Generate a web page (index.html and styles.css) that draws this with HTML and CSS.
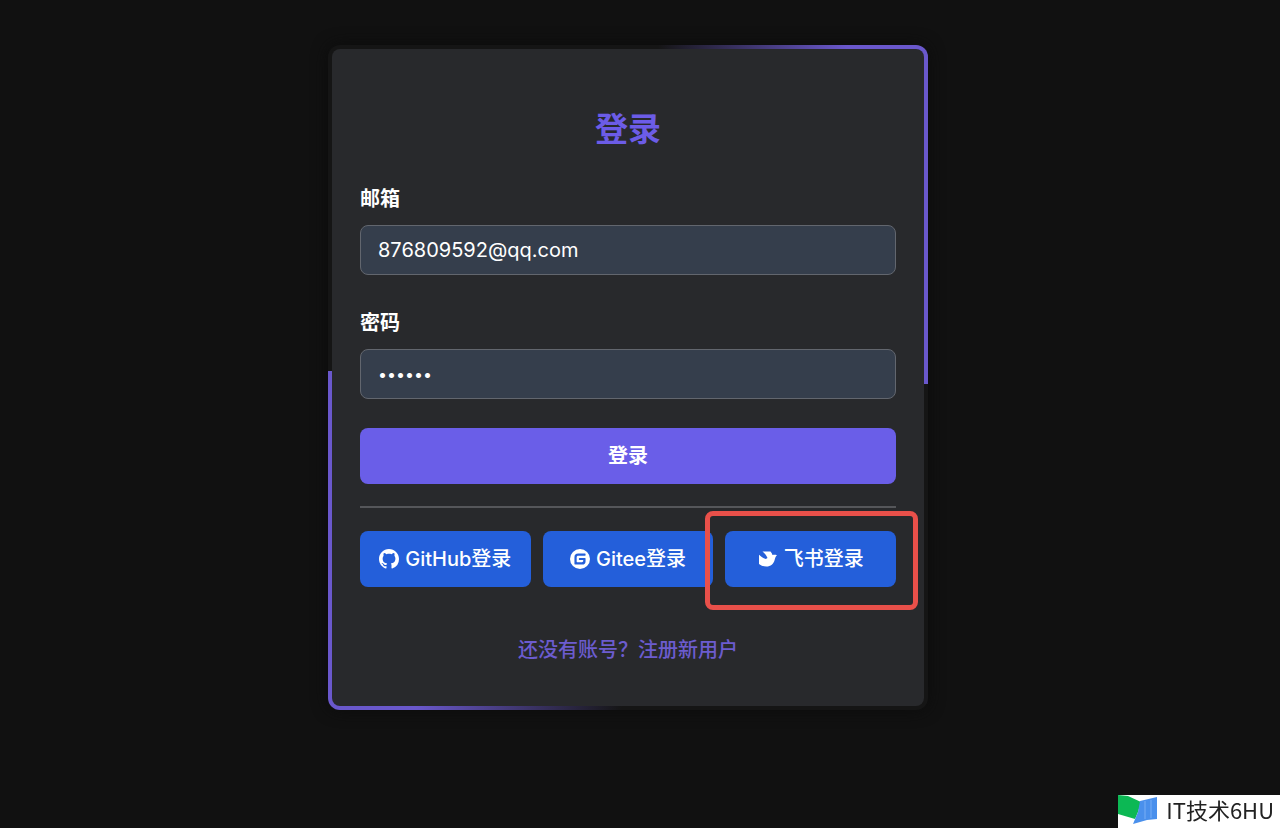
FILE: index.html
```html
<!DOCTYPE html>
<html lang="zh-CN">
  <head>
    <meta charset="utf-8">
    <title>登录</title>
    <link rel="stylesheet" href="styles.css">
  </head>
  <body>
    <main class="page">
      <div class="frame">
        <form class="card">
          <h1 class="title">登录</h1>
          <label class="label" for="email">邮箱</label>
          <input class="field" id="email" type="email" value="876809592@qq.com">
          <label class="label" for="password">密码</label>
          <input class="field" id="password" type="password" value="123456">
          <button class="btn btn-login" type="submit">登录</button>
          <hr class="line">
          <div class="others">
            <button class="btn btn-other" type="button">
              <svg class="icon" viewBox="0 0 16 16"><path d="M8 0C3.58 0 0 3.58 0 8c0 3.54 2.29 6.53 5.47 7.59.4.07.55-.17.55-.38 0-.19-.01-.82-.01-1.49-2.01.37-2.53-.49-2.69-.94-.09-.23-.48-.94-.82-1.13-.28-.15-.68-.52-.01-.53.63-.01 1.08.58 1.23.82.72 1.21 1.87.87 2.33.66.07-.52.28-.87.51-1.07-1.78-.2-3.64-.89-3.64-3.95 0-.87.31-1.59.82-2.15-.08-.2-.36-1.02.08-2.12 0 0 .67-.21 2.2.82.64-.18 1.32-.27 2-.27s1.36.09 2 .27c1.53-1.04 2.2-.82 2.2-.82.44 1.1.16 1.92.08 2.12.51.56.82 1.27.82 2.15 0 3.07-1.87 3.75-3.65 3.95.29.25.54.73.54 1.48 0 1.07-.01 1.93-.01 2.2 0 .21.15.46.55.38A8.01 8.01 0 0 0 16 8c0-4.42-3.58-8-8-8z"/></svg>
              <span>GitHub登录</span>
            </button>
            <button class="btn btn-other" type="button">
              <svg class="icon" viewBox="0 0 24 24"><path d="M11.984 0A12 12 0 0 0 0 12a12 12 0 0 0 12 12 12 12 0 0 0 12-12A12 12 0 0 0 12 0zm6.09 5.333c.328 0 .593.266.592.593v1.482a.594.594 0 0 1-.593.592H9.777c-.982 0-1.778.796-1.778 1.778v5.63c0 .327.266.592.593.592h5.63c.982 0 1.778-.796 1.778-1.778v-.296a.593.593 0 0 0-.592-.593h-4.15a.592.592 0 0 1-.592-.592v-1.482a.593.593 0 0 1 .593-.592h6.815c.327 0 .593.265.593.592v3.408a4 4 0 0 1-4 4H5.926a.593.593 0 0 1-.593-.593V9.778a4.444 4.444 0 0 1 4.445-4.444h8.296z"/></svg>
              <span>Gitee登录</span>
            </button>
            <div class="marked">
              <button class="btn btn-other" type="button">
                <svg class="icon" viewBox="0 0 20 20"><path d="M4.500 2.500h8c1 1.100 1.700 2.200 2 3.500 1.500-.4 3-.3 4.500.2-1.200 1.100-1.700 2.300-2.300 4.500-1 4-4 6.800-8.300 6.800-3 0-5.300-.8-7.400-2.500V5.800c2.100 2.100 4.300 3.600 6.800 4.300l1.700-1.200C8.500 6.600 6.800 4.400 4.500 2.500z"/></svg>
                <span>飞书登录</span>
              </button>
            </div>
          </div>
          <a class="register" href="#">还没有账号？注册新用户</a>
        </form>
      </div>
    </main>
    <div class="watermark">
      <svg class="watermark-logo" viewBox="0 0 40 32"><path d="M0 0l10 1 13 6-3 10-3 7L0 19z" fill="#0cb854"/><path d="M22 6l17-4v22l-10 1-14 4 5-12z" fill="#4a90ec"/><path d="M27 6v18M33 5v18" stroke="#79aef5"/></svg>
      <span>IT技术6HU</span>
    </div>
  </body>
</html>
```
FILE: styles.css
```css
* {
    box-sizing: border-box;
}
body {
    margin: 0;
    min-height: 100vh;
    background: #111;
    color: #fff;
    font-family: Inter, "Noto Sans CJK SC", sans-serif;
    font-size: 20px;
    line-height: 28px;
}
.page {
    padding: 45px 24px 45px 0;
}
/* two purple corners behind the card */
.frame {
    max-width: 600px;
    margin: 0 auto;
    padding: 4px;
    border-radius: 12px;
    background:
        linear-gradient(to right, transparent, #6a58cc 70%) top right / 45% 51% no-repeat,
        linear-gradient(to left, transparent, #6a58cc 70%) bottom left / 49% 51% no-repeat,
        #151515;
    box-shadow: 0 0 16px #0c0c0c;
}
.card {
    display: flex;
    flex-direction: column;
    padding: 56px 28px 42px;
    border-radius: 8px;
    background: #28292c;
}
.title {
    margin: 0 0 32px;
    color: #6c5ce7;
    font-size: 33px;
    line-height: 48px;
    text-align: center;
}
.label {
    margin-bottom: 12px;
    font-weight: 600;
}
.field {
    width: 100%;
    height: 50px;
    margin-bottom: 34px;
    padding: 0 17px;
    border: 1px solid #62666e;
    border-radius: 8px;
    background: #353e4c;
    color: #fff;
    font: inherit;
    outline: none;
}
#password {
    margin-bottom: 29px;
    font-size: 16px;
}
.btn {
    width: 100%;
    height: 56px;
    padding: 0;
    border: 0;
    border-radius: 8px;
    color: #fff;
    font: inherit;
    font-weight: 600;
    cursor: pointer;
}
.btn-login {
    background: #6a5ee8;
}
.line {
    width: 100%;
    height: 2px;
    margin: 22px 0 23px;
    border: 0;
    background: #55565a;
}
.others {
    display: grid;
    grid-template-columns: repeat(3, 1fr);
    gap: 12px;
}
.btn-other {
    display: flex;
    align-items: center;
    justify-content: center;
    gap: 6px;
    background: #245fda;
    font-weight: 500;
}
.icon {
    width: 20px;
    height: 20px;
    fill: #fff;
}
.marked {
    position: relative;
}
.marked::after {
    content: "";
    position: absolute;
    inset: -20px -22px -23px -20px;
    border: 5px solid #e9504a;
    border-radius: 8px;
    pointer-events: none;
}
.register {
    align-self: center;
    margin-top: 49px;
    color: #6c5ccf;
    font-weight: 500;
    text-decoration: none;
}
.watermark {
    position: fixed;
    right: 0;
    bottom: 0;
    display: flex;
    gap: 8px;
    height: 33px;
    padding-right: 6px;
    background: #fff;
    color: #222;
    font-family: "Noto Sans CJK SC", sans-serif;
    font-size: 22px;
}
.watermark-logo {
    width: 40px;
    height: 32px;
}
```
